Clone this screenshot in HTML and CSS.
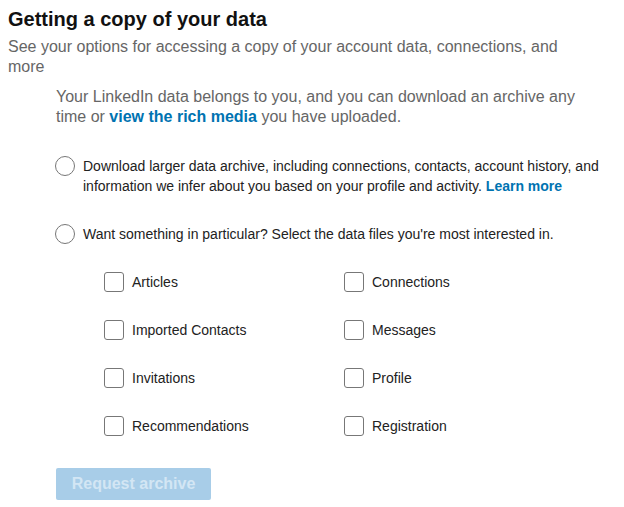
FILE: index.html
```html
<!DOCTYPE html>
<html>
<head>
<meta charset="utf-8">
<link rel="stylesheet" href="styles.css">
</head>
<body>
<div class="page">
  <h1 class="title">Getting a copy of your data</h1>
  <p class="subtitle">See your options for accessing a copy of your account data, connections, and more</p>
  <div class="content">
    <p class="intro">Your LinkedIn data belongs to you, and you can download an archive any time or <a class="link" href="#">view the rich media</a> you have uploaded.</p>
    <div class="option">
      <span class="radio"></span>
      <span class="option-text">Download larger data archive, including connections, contacts, account history, and information we infer about you based on your profile and activity. <a class="link" href="#">Learn more</a></span>
    </div>
    <div class="option option-second">
      <span class="radio"></span>
      <span class="option-text">Want something in particular? Select the data files you're most interested in.</span>
    </div>
    <div class="grid">
      <div class="check"><span class="box"></span><span>Articles</span></div>
      <div class="check"><span class="box"></span><span>Connections</span></div>
      <div class="check"><span class="box"></span><span>Imported Contacts</span></div>
      <div class="check"><span class="box"></span><span>Messages</span></div>
      <div class="check"><span class="box"></span><span>Invitations</span></div>
      <div class="check"><span class="box"></span><span>Profile</span></div>
      <div class="check"><span class="box"></span><span>Recommendations</span></div>
      <div class="check"><span class="box"></span><span>Registration</span></div>
    </div>
    <button class="btn" type="button">Request archive</button>
  </div>
</div>
</body>
</html>
```
FILE: styles.css
```css
html, body {
  margin: 0;
  padding: 0;
  background: #fff;
}
body {
  font-family: "Liberation Sans", Arial, sans-serif;
}
.page {
  padding: 7px 8px 0 8px;
}
.title {
  margin: 0;
  font-size: 20px;
  line-height: 24px;
  font-weight: bold;
  color: #111;
}
.subtitle {
  margin: 6px 0 0 0;
  font-size: 16px;
  line-height: 20px;
  color: #666;
  padding-right: 50px;
}
.content {
  padding-left: 48px;
}
.intro {
  margin: 10px 0 0 0;
  font-size: 16px;
  line-height: 20px;
  color: #666;
  padding-right: 40px;
}
.link {
  color: #0073b1;
  font-weight: bold;
  text-decoration: none;
}
.option {
  display: flex;
  gap: 8px;
  margin-top: 29px;
  font-size: 14px;
  line-height: 20px;
  color: #222;
}
.option-second {
  margin-top: 28px;
}
.radio {
  flex: none;
  width: 18px;
  height: 18px;
  border: 1px solid #777;
  border-radius: 50%;
  margin-left: -1px;
}
.grid {
  display: grid;
  grid-template-columns: 240px 240px;
  row-gap: 28px;
  margin-top: 28px;
  padding-left: 48px;
}
.check {
  display: flex;
  align-items: center;
  gap: 8px;
  font-size: 14px;
  line-height: 20px;
  color: #222;
}
.box {
  flex: none;
  width: 18px;
  height: 18px;
  border: 1px solid #777;
  border-radius: 3px;
}
.btn {
  display: block;
  margin-top: 32px;
  width: 155px;
  height: 32px;
  padding: 0;
  border: none;
  border-radius: 2px;
  background: #a8cde8;
  color: #d3e6f4;
  font-family: "Liberation Sans", Arial, sans-serif;
  font-size: 16px;
  font-weight: bold;
}
```
